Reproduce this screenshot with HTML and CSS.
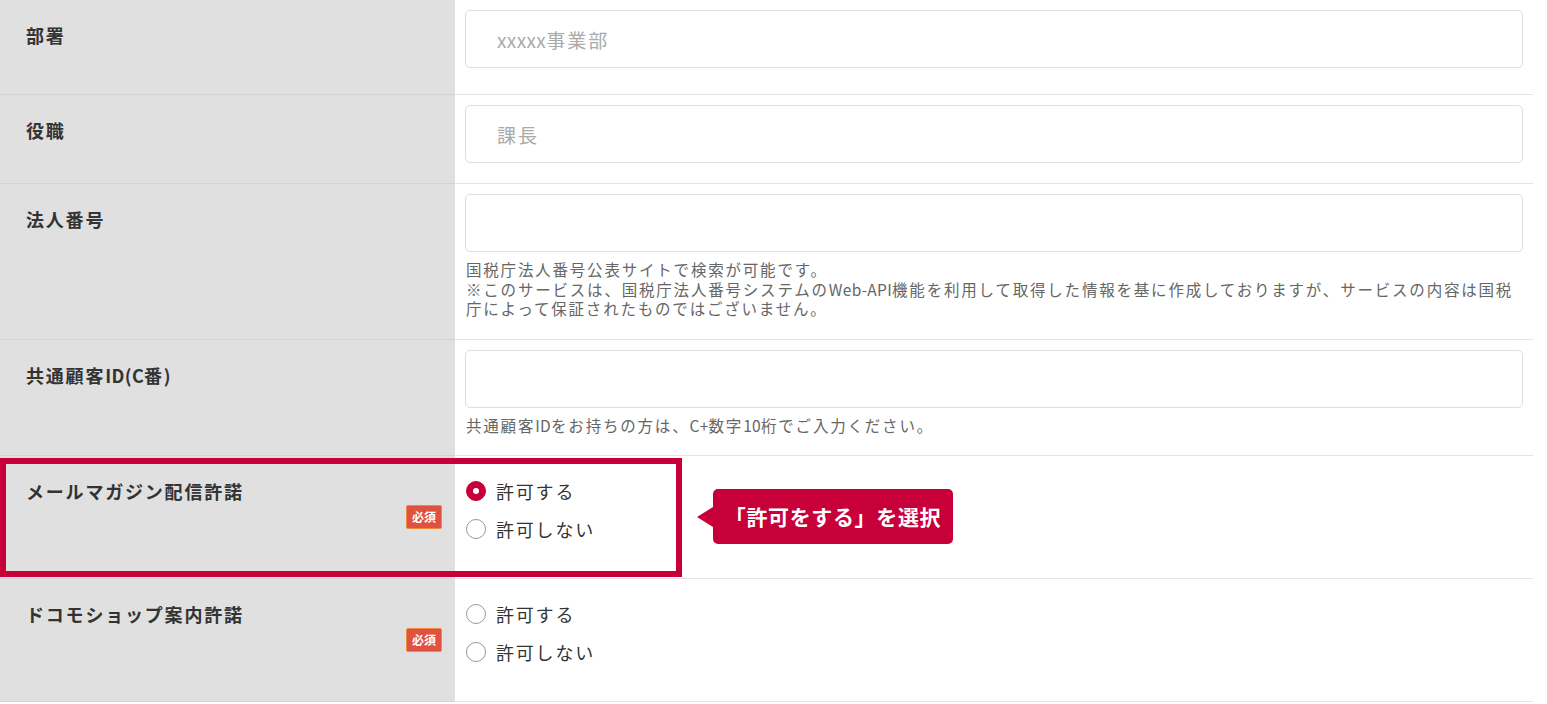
FILE: index.html
```html
<!DOCTYPE html>
<html lang="ja">
<head>
<meta charset="utf-8">
<title>フォーム</title>
<link rel="stylesheet" href="styles.css">
</head>
<body>
<div class="form">
  <div class="row row-first">
    <div class="label"><span class="label-text">部署</span></div>
    <div class="field"><div class="input placeholder"><span class="latin">xxxxx</span>事業部</div></div>
  </div>
  <div class="row">
    <div class="label"><span class="label-text">役職</span></div>
    <div class="field"><div class="input placeholder">課長</div></div>
  </div>
  <div class="row">
    <div class="label"><span class="label-text">法人番号</span></div>
    <div class="field">
      <div class="input"></div>
      <p class="help"><span class="line">国税庁法人番号公表サイトで検索が可能です。</span><span class="line">※このサービスは、国税庁法人番号システムの<span class="latin">Web-API</span>機能を利用して取得した情報を基に作成しておりますが、サービスの内容は国税</span><span class="line">庁によって保証されたものではございません。</span></p>
    </div>
  </div>
  <div class="row">
    <div class="label"><span class="label-text">共通顧客<span class="latin">ID(C</span>番<span class="latin">)</span></span></div>
    <div class="field">
      <div class="input"></div>
      <p class="help"><span class="line">共通顧客<span class="latin">ID</span>をお持ちの方は、<span class="latin">C+</span>数字<span class="latin">10</span>桁でご入力ください。</span></p>
    </div>
  </div>
  <div class="row row-radio">
    <div class="label"><span class="label-text">メールマガジン配信許諾</span><span class="badge">必須</span></div>
    <div class="field field-radio">
      <div class="radio"><span class="dot checked"></span>許可する</div>
      <div class="radio"><span class="dot"></span>許可しない</div>
    </div>
    <div class="highlight"></div>
    <div class="callout">「許可をする」を選択</div>
  </div>
  <div class="row row-radio">
    <div class="label"><span class="label-text">ドコモショップ案内許諾</span><span class="badge">必須</span></div>
    <div class="field field-radio">
      <div class="radio"><span class="dot"></span>許可する</div>
      <div class="radio"><span class="dot"></span>許可しない</div>
    </div>
  </div>
</div>
</body>
</html>
```
FILE: styles.css
```css
* { box-sizing: border-box; }
html, body {
  margin: 0;
  padding: 0;
  background: #fff;
}
body {
  font-family: "Noto Sans CJK JP", "Noto Sans", sans-serif;
  color: #333;
}
.form {
  width: 1533px;
}
.row {
  display: flex;
  position: relative;
}
.latin {
  letter-spacing: 0.02em;
}
.label {
  flex: 0 0 455px;
  background: #e0e0e0;
  border-bottom: 1px solid #d4d4d4;
  padding: 22px 13px 0 26px;
  display: flex;
  flex-direction: column;
}
.label-text {
  font-size: 18px;
  line-height: 26px;
  font-weight: 700;
  letter-spacing: 0.1em;
  color: #333;
}
.badge {
  align-self: flex-end;
  margin-top: 1px;
  width: 36px;
  height: 24px;
  background: #de523f;
  border: 1px solid #ef8a3c;
  border-radius: 2px;
  color: #fff;
  font-size: 12px;
  font-weight: 700;
  line-height: 22px;
  text-align: center;
}
.field {
  flex: 1;
  border-bottom: 1px solid #e4e4e4;
  padding: 10px 10px 20px 10px;
}
.row-first .field {
  padding-bottom: 26px;
}
.input {
  height: 58px;
  border: 1px solid #dedede;
  border-radius: 5px;
  background: #fff;
  padding: 0 31px;
  display: flex;
  align-items: center;
  font-size: 19px;
  letter-spacing: 2px;
}
.placeholder {
  color: #aaa;
}
.help {
  margin: 8px 0 0 1px;
  font-size: 15.5px;
  line-height: 19.5px;
  letter-spacing: 1.8px;
  color: #666;
  display: flex;
  flex-direction: column;
}
.help .line {
  display: block;
  height: 19.5px;
  white-space: nowrap;
  overflow: visible;
}
.field-radio {
  padding: 22px 10px 36px 11px;
  display: flex;
  flex-direction: column;
  gap: 12px;
}
.radio {
  display: flex;
  align-items: center;
  gap: 10px;
  height: 26px;
  font-size: 18px;
  letter-spacing: 0.1em;
  color: #333;
}
.dot {
  width: 20px;
  height: 20px;
  border: 1px solid #9a9a9a;
  border-radius: 50%;
  background: #fff;
  display: flex;
  align-items: center;
  justify-content: center;
  flex: 0 0 auto;
}
.dot.checked {
  background: #c8003a;
  border-color: #c8003a;
}
.dot.checked::after {
  content: "";
  width: 6px;
  height: 6px;
  border-radius: 50%;
  background: #fff;
}
.highlight {
  position: absolute;
  left: 0;
  top: 2px;
  width: 682px;
  height: 119px;
  border: 6px solid #c8003a;
  pointer-events: none;
}
.callout {
  position: absolute;
  left: 713px;
  top: 33px;
  width: 240px;
  height: 55px;
  background: #c8003a;
  border-radius: 5px;
  color: #fff;
  font-size: 21px;
  font-weight: 700;
  letter-spacing: 0.03em;
  line-height: 55px;
  text-align: center;
  white-space: nowrap;
}
.callout::before {
  content: "";
  position: absolute;
  left: -16px;
  top: 18px;
  border-top: 10px solid transparent;
  border-bottom: 10px solid transparent;
  border-right: 16px solid #c8003a;
}
```
